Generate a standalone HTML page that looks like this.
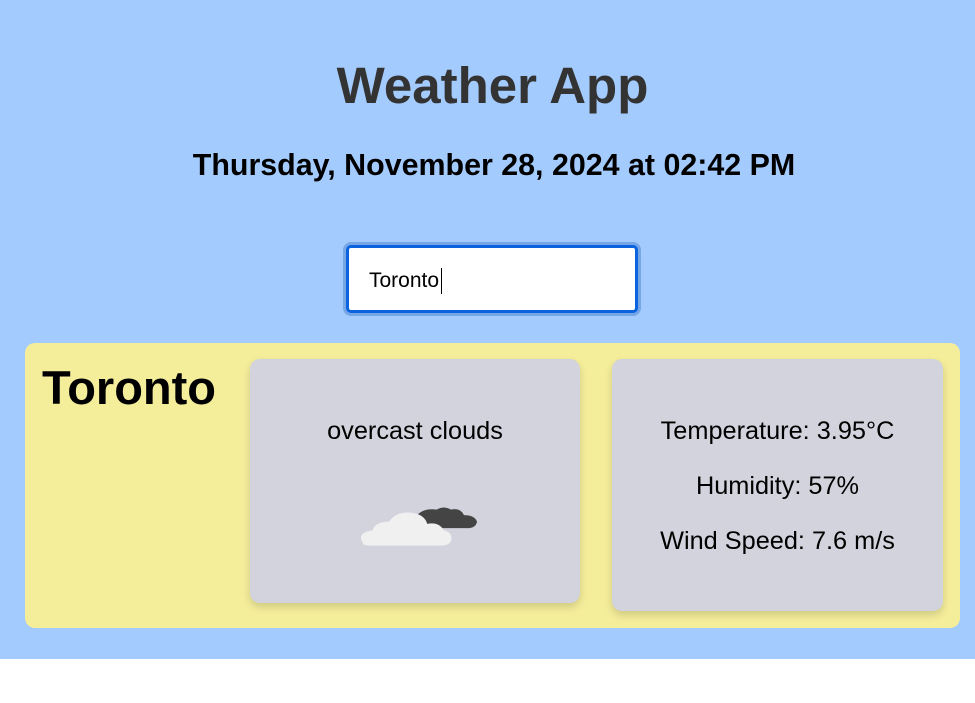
<!DOCTYPE html>
<html><head><style>
html,body{margin:0;padding:0;}
body{width:975px;height:703px;background:#fff;font-family:"Liberation Sans",Arial,sans-serif;position:relative;overflow:hidden;}
.bg{position:absolute;left:0;top:0;width:975px;height:659px;background:#a4cbfd;}
h1{position:absolute;top:56px;left:0;width:985px;text-align:center;margin:0;font-size:51px;font-weight:bold;color:#333;}
.date{position:absolute;top:148px;left:0;width:988px;text-align:center;font-size:30.4px;font-weight:bold;color:#000;}
.inp{position:absolute;left:346px;top:245px;width:292px;height:68px;background:#fff;border:3px solid #0b63e0;border-radius:5px;box-shadow:0 0 0 3px #76a6e6;box-sizing:border-box;}
.inp span{position:absolute;left:20px;top:21px;font-size:21px;color:#000;}
.inp i{position:absolute;left:92px;top:20px;width:1px;height:26px;background:#000;}
.card{position:absolute;left:25px;top:343px;width:935px;height:285px;background:#f4ed9a;border-radius:10px;}
.city{position:absolute;left:42px;top:360px;font-size:47px;font-weight:bold;color:#000;}
.box{position:absolute;background:#d2d3dc;border-radius:10px;box-shadow:0 4px 8px rgba(0,0,0,.15);text-align:center;font-size:25.3px;color:#000;}
.b1{left:250px;top:359px;width:330px;height:244px;}
.b2{left:612px;top:359px;width:331px;height:252px;}
</style></head><body>
<div class="bg"></div>
<h1>Weather App</h1>
<div class="date">Thursday, November 28, 2024 at 02:42 PM</div>
<div class="inp"><span>Toronto</span><i></i></div>
<div class="card"></div>
<div class="city">Toronto</div>
<div class="box b1"><div style="position:absolute;top:58px;width:100%">overcast clouds</div>
<svg style="position:absolute;left:106px;top:143px" width="140" height="48" viewBox="0 0 118 44" preserveAspectRatio="none">
<path d="M50 14 q6-9 18-7 q6-4 12 0 q8-2 11 5 q9 0 11 6 q-1 6-8 6 h-40 q-6 0-4-10z" fill="#444"/>
<path d="M6 38 q-6-10 8-12 q2-8 14-8 q6-10 20-8 q10 2 12 10 q10-2 14 6 q8 2 6 10 q-2 4-8 4 h-58 q-8 0-8-2z" fill="#f0f0f0"/>
</svg></div>
<div class="box b2"><div style="position:absolute;top:58px;width:100%">Temperature: 3.95°C</div>
<div style="position:absolute;top:113px;width:100%">Humidity: 57%</div>
<div style="position:absolute;top:168px;width:100%">Wind Speed: 7.6 m/s</div></div>
</body></html>
